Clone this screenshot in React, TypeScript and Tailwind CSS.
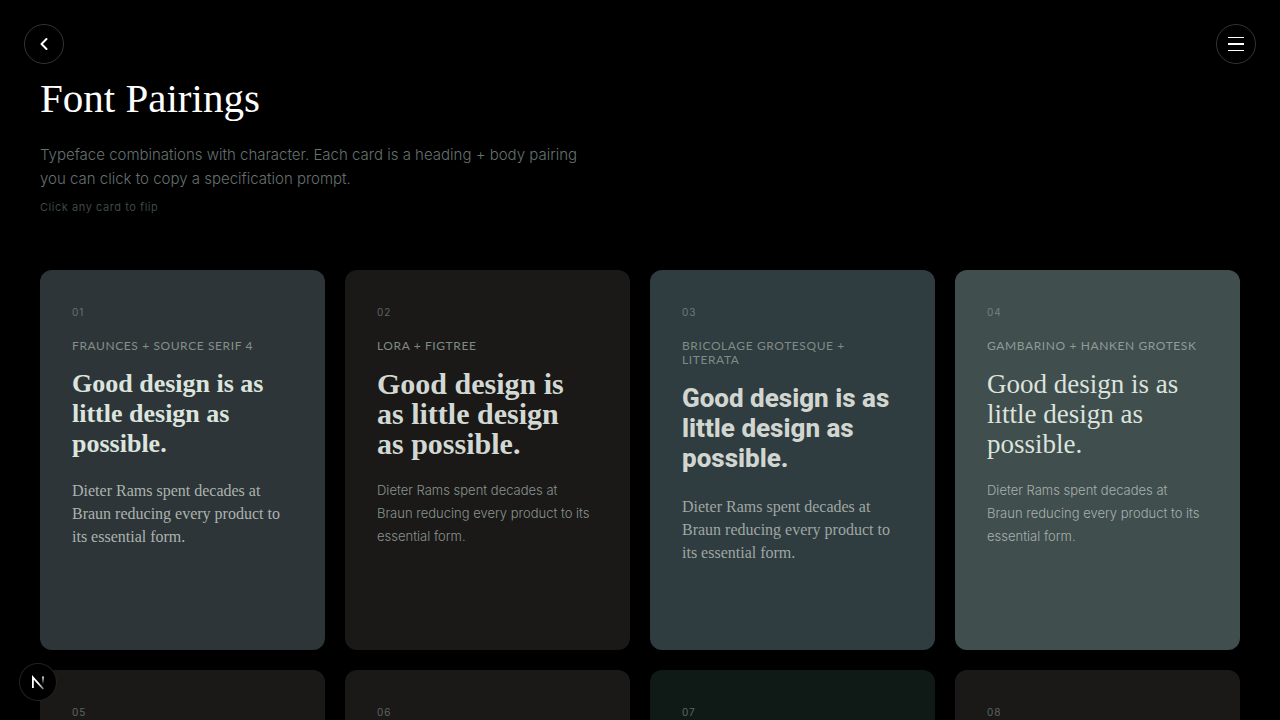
import clsx from 'clsx';

type Pairing = {
  id: string;
  name?: string;
  sample?: string;
  body?: string;
  card: string;
  number: string;
  label?: string;
  heading?: string;
  text?: string;
};

const pairings: Pairing[] = [
  {
    id: '01',
    name: 'Fraunces + Source Serif 4',
    sample: 'Good design is as\nlittle design as\npossible.',
    body: 'Dieter Rams spent decades at\nBraun reducing every product to\nits essential form.',
    card: 'bg-[#2d3538]',
    number: 'text-[#66716f]',
    label: 'text-[#849089]',
    heading: "font-['Liberation_Serif',serif] text-[26px] font-bold text-[#dce4de]",
    text: "mt-5 font-['Liberation_Serif',serif] text-base text-[#abb3ae]",
  },
  {
    id: '02',
    name: 'Lora + Figtree',
    sample: 'Good design is\nas little design\nas possible.',
    body: 'Dieter Rams spent decades at\nBraun reducing every product to its\nessential form.',
    card: 'bg-[#1a1917]',
    number: 'text-[#5a6664]',
    label: 'text-[#7f8a87]',
    heading: "font-['Liberation_Serif',serif] text-[30px] font-bold text-[#d2d8d3]",
    text: "mt-5 font-['Inter',sans-serif] text-[13px] font-light text-[#89938f]",
  },
  {
    id: '03',
    name: 'Bricolage Grotesque +\nLiterata',
    sample: 'Good design is as\nlittle design as\npossible.',
    body: 'Dieter Rams spent decades at\nBraun reducing every product to\nits essential form.',
    card: 'bg-[#2f3c40]',
    number: 'text-[#6f7a78]',
    label: 'text-[#818b86]',
    heading: "font-['Roboto',sans-serif] text-[26px] font-extrabold text-[#d2d6d0]",
    text: "mt-[22px] font-['Liberation_Serif',serif] text-base text-[#9fa7a3]",
  },
  {
    id: '04',
    name: 'Gambarino + Hanken Grotesk',
    sample: 'Good design is as\nlittle design as\npossible.',
    body: 'Dieter Rams spent decades at\nBraun reducing every product to its\nessential form.',
    card: 'bg-[#404e4e]',
    number: 'text-[#758080]',
    label: 'text-[#919b98]',
    heading: "font-['Liberation_Serif',serif] text-[27px] text-[#dce3dd]",
    text: "mt-5 font-['Inter',sans-serif] text-[13px] font-light text-[#a8b0ad]",
  },
  { id: '05', card: 'bg-[#1a1917]', number: 'text-[#5a6664]' },
  { id: '06', card: 'bg-[#1a1917]', number: 'text-[#5a6664]' },
  { id: '07', card: 'bg-[#0f1a17]', number: 'text-[#5a6664]' },
  { id: '08', card: 'bg-[#1a1917]', number: 'text-[#5a6664]' },
];

function PairingCard({ pairing }: { pairing: Pairing }) {
  return (
    <button
      type="button"
      className={clsx(
        'flex aspect-[3/4] cursor-pointer flex-col items-start rounded-xl px-8 pt-[35px] text-left',
        pairing.card,
      )}
    >
      <span className={clsx('text-[10px] leading-[14px] tracking-widest', pairing.number)}>
        {pairing.id}
      </span>
      {pairing.name && (
        <>
          <span
            className={clsx(
              "mt-5 font-['Lato',sans-serif] text-xs leading-[14px] tracking-wider whitespace-pre-line uppercase",
              pairing.label,
            )}
          >
            {pairing.name}
          </span>
          <span
            className={clsx('mt-4 leading-[30px] whitespace-pre-line', pairing.heading)}
          >
            {pairing.sample}
          </span>
          <span className={clsx('leading-[23px] whitespace-pre-line', pairing.text)}>
            {pairing.body}
          </span>
        </>
      )}
    </button>
  );
}

function NextBadge() {
  return (
    <button
      type="button"
      aria-label="Open dev tools"
      className="fixed bottom-5 left-5 flex size-9 items-center justify-center rounded-full bg-black ring-1 ring-[#222]"
    >
      <svg width="14" height="15" viewBox="0 0 14 15" fill="none">
        <defs>
          <linearGradient id="diagonal" x1="8" y1="8" x2="13" y2="14" gradientUnits="userSpaceOnUse">
            <stop stopColor="#fff" />
            <stop offset="1" stopColor="#fff" stopOpacity="0.4" />
          </linearGradient>
          <linearGradient id="stem" x1="11" y1="1" x2="11" y2="9" gradientUnits="userSpaceOnUse">
            <stop stopColor="#fff" />
            <stop offset="1" stopColor="#fff" stopOpacity="0" />
          </linearGradient>
        </defs>
        <path d="M1.9 13V2.4l10.4 11.6" stroke="url(#diagonal)" strokeWidth="1.8" />
        <path d="M12 1.5v8" stroke="url(#stem)" strokeWidth="1.8" />
      </svg>
    </button>
  );
}

export default function App() {
  return (
    <div className="min-h-screen bg-black font-['Inter',sans-serif]">
      <button
        type="button"
        aria-label="Back"
        className="fixed top-6 left-6 flex size-10 items-center justify-center rounded-full border border-[#2f3537] bg-black"
      >
        <svg width="16" height="16" viewBox="0 0 16 16" fill="none">
          <path
            d="M10.5 3 5.5 8l5 5"
            stroke="#fff"
            strokeWidth="2"
            strokeLinecap="round"
            strokeLinejoin="round"
          />
        </svg>
      </button>
      <button
        type="button"
        aria-label="Menu"
        className="fixed top-6 right-6 flex size-10 items-center justify-center rounded-full border border-[#2f3537] bg-black"
      >
        <svg width="16" height="16" viewBox="0 0 16 16" fill="#fff">
          <path d="M0 1h16v1H0zM0 7h16v2H0zM0 14h16v1H0z" />
        </svg>
      </button>

      <main className="px-10 pt-[68px] pb-20">
        <header>
          <h1 className="font-['Liberation_Serif',serif] text-[41px] leading-[60px] text-white">
            Font Pairings
          </h1>
          <p className="mt-[15px] max-w-[560px] text-[15px] leading-6 font-light text-[#65716f]">
            Typeface combinations with character. Each card is a heading + body pairing you can
            click to copy a specification prompt.
          </p>
          <p className="mt-2 text-[11px] leading-4 tracking-wider text-[#3d4849]">
            Click any card to flip
          </p>
        </header>
        <section className="mt-[55px] grid grid-cols-2 gap-5 md:grid-cols-4">
          {pairings.map((pairing) => (
            <PairingCard key={pairing.id} pairing={pairing} />
          ))}
        </section>
      </main>

      <NextBadge />
    </div>
  );
}
